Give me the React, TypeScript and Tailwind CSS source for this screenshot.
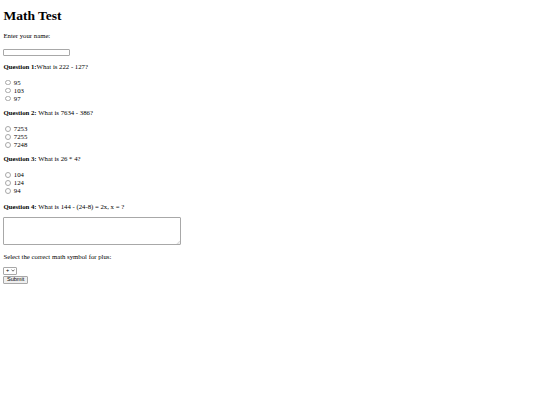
import React from "react";

const QUESTIONS = [
  { label: "Question 1:", text: "What is 222 - 127?", options: ["95", "103", "97"] },
  { label: "Question 2:", text: " What is 7634 - 386?", options: ["7253", "7255", "7248"] },
  { label: "Question 3:", text: " What is 26 * 4?", options: ["104", "124", "94"] },
];

export default function App() {
  return (
    <div className="min-h-[405px] bg-white text-black font-['Liberation_Serif','Times_New_Roman',serif] text-[6.75px] leading-[7.8px] pt-[8.4px] px-[3.4px]">
      <h1 className="text-[13.5px] leading-[15.4px] font-bold">Math Test</h1>
      <form onSubmit={(e) => e.preventDefault()}>
        <p className="mt-[8.2px]">Enter your name:</p>
        <input
          type="text"
          className="block mt-[8.8px] w-[67px] h-[7.8px] border-[0.6px] border-[#a8a8a8] rounded-[1px] outline-none"
        />

        {QUESTIONS.map((q, i) => (
          <div key={i} className={i === 0 ? "mt-[6.6px]" : "mt-[6.4px]"}>
            <p>
              <b>{q.label}</b>
              {q.text}
            </p>
            <div className="mt-[8px]">
              {q.options.map((opt) => (
                <label key={opt} className="flex items-center h-[8px]">
                  <input
                    type="radio"
                    name={"q" + (i + 1)}
                    value={opt}
                    className="appearance-none ml-[2.1px] mr-[2.9px] w-[5.4px] h-[5.4px] rounded-full border-[0.5px] border-[#a8a8a8] bg-white"
                  />
                  <span>{opt}</span>
                </label>
              ))}
            </div>
          </div>
        ))}

        <p className="mt-[7.4px]">
          <b>Question 4:</b> What is 144 - (24-8) = 2x, x = ?
        </p>
        <div className="relative mt-[6.4px] w-[178px] h-[28px]">
          <textarea className="block w-full h-full resize-none border-[0.6px] border-[#a8a8a8] rounded-[1px] outline-none" />
          <svg className="absolute right-[1px] bottom-[1px]" width="4" height="4" viewBox="0 0 4 4">
            <path d="M4 0.8 L0.8 4 M4 2.4 L2.4 4" stroke="#aaa" strokeWidth="0.5" />
          </svg>
        </div>

        <p className="mt-[8.4px]">Select the correct math symbol for plus:</p>
        <div className="mt-[6px] flex">
          <div className="flex items-center gap-[1.5px] h-[8px] px-[1.6px] border-[0.6px] border-[#a8a8a8] rounded-[1px] font-['Liberation_Sans',Arial,sans-serif] text-[5.6px] leading-none">
            <span>+</span>
            <svg width="4" height="3" viewBox="0 0 4 3">
              <path d="M0.5 0.6 L2 2.2 L3.5 0.6" fill="none" stroke="#333" strokeWidth="0.7" />
            </svg>
          </div>
        </div>
        <button
          type="submit"
          className="block mt-[0.6px] h-[8.4px] w-[24.5px] bg-[#efefef] border-[0.6px] border-[#a8a8a8] rounded-[1px] font-['Liberation_Sans',Arial,sans-serif] text-[5.6px] leading-none"
        >
          Submit
        </button>
      </form>
    </div>
  );
}
